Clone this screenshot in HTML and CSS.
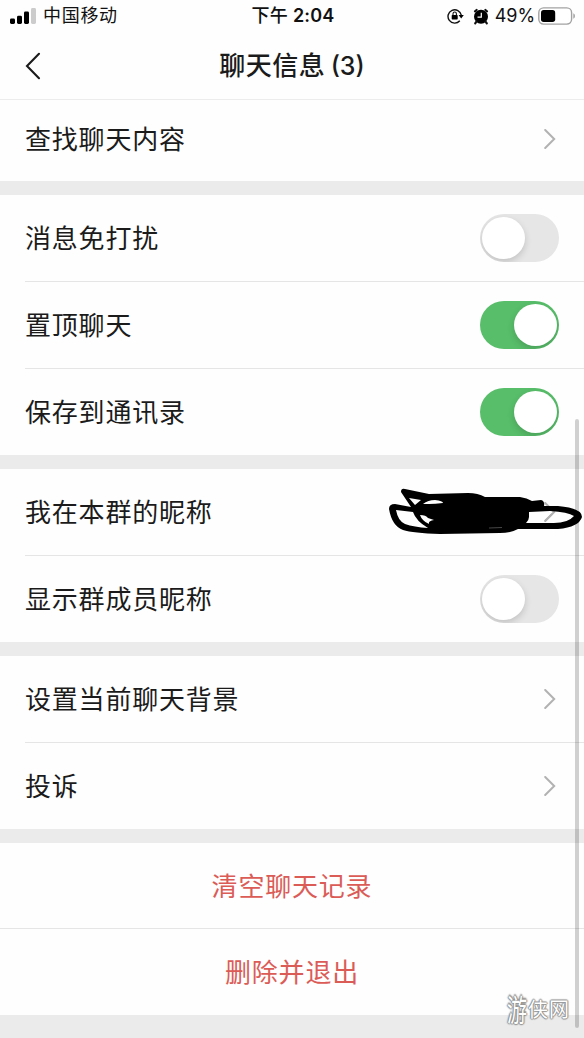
FILE: index.html
```html
<!DOCTYPE html>
<html lang="zh-CN">
<head>
<meta charset="utf-8">
<title>聊天信息</title>
<link rel="stylesheet" href="styles.css">
</head>
<body>
<main class="screen">
  <div class="status">
    <div class="carrier">
      <svg class="signal" width="27" height="16" viewBox="0 0 27 16"><rect x="0" y="10.5" width="5" height="5.5" rx="1.4"/><rect x="7" y="7.8" width="5" height="8.2" rx="1.4"/><rect x="14" y="3.5" width="5" height="12.5" rx="1.4"/><rect x="21" y="0" width="5" height="16" rx="1.4" fill="#ccc"/></svg>
      <span>中国移动</span>
    </div>
    <div class="time">下午 <b>2:04</b></div>
    <div class="indicators">
      <svg width="17" height="16" viewBox="0 0 17 16"><path d="M12.8 12.8A6.7 6.7 0 1 1 14.3 7.2" fill="none" stroke="#111" stroke-width="1.4"/><path d="M11.6 7h5.2l-2.6 3.5z"/><rect x="4.7" y="7" width="6" height="4.5" rx=".7"/><path d="M6 7.4V5.7a1.7 1.7 0 0 1 3.4 0v1.7" fill="none" stroke="#111" stroke-width="1.1"/></svg>
      <svg class="alarm" width="16" height="17" viewBox="0 0 16 17"><circle cx="8" cy="8.8" r="7"/><path d="M2 3.3 3.6 2M14 3.3 12.4 2M3.5 13.5 2.2 15.4M12.5 13.5l1.3 1.9" stroke="#111" stroke-width="2.2" stroke-linecap="round"/><path d="M8.3 4.8v4.4H4.5" fill="none" stroke="#fff" stroke-width="1.2"/></svg>
      <span class="percent">49%</span>
      <svg class="battery" width="38" height="18" viewBox="0 0 38 18"><rect x=".8" y=".9" width="32.8" height="16.2" rx="4.8" fill="#fff" stroke="#a2a2a2" stroke-width="1.4"/><rect x="3" y="3" width="14.2" height="12" rx="2.7"/><path d="M35.3 6.2q1.7.6 1.7 2.8t-1.7 2.8z" fill="#a2a2a2"/></svg>
    </div>
  </div>
  <header class="nav">
    <svg class="back" width="16" height="28" viewBox="0 0 16 28"><path d="M14 1.8 2 14l12 12.2"/></svg>
    <h1>聊天信息 <span>(3)</span></h1>
  </header>

  <section class="group search">
    <div class="row"><span>查找聊天内容</span><svg class="chevron" viewBox="0 0 12 20"><path d="m1.2 1 9 9-9 9"/></svg></div>
  </section>
  <section class="group">
    <div class="row"><span>消息免打扰</span><i class="switch"></i></div>
    <div class="row"><span>置顶聊天</span><i class="switch on"></i></div>
    <div class="row"><span>保存到通讯录</span><i class="switch on"></i></div>
  </section>
  <section class="group">
    <div class="row"><span>我在本群的昵称</span><svg class="chevron" viewBox="0 0 12 20"><path d="m1.2 1 9 9-9 9"/></svg></div>
    <div class="row"><span>显示群成员昵称</span><i class="switch"></i></div>
  </section>
  <section class="group">
    <div class="row"><span>设置当前聊天背景</span><svg class="chevron" viewBox="0 0 12 20"><path d="m1.2 1 9 9-9 9"/></svg></div>
    <div class="row"><span>投诉</span><svg class="chevron" viewBox="0 0 12 20"><path d="m1.2 1 9 9-9 9"/></svg></div>
  </section>
  <section class="group danger">
    <div class="row"><span>清空聊天记录</span></div>
    <div class="row"><span>删除并退出</span></div>
  </section>

  <div class="scrollbar"></div>
  <svg class="scribble" viewBox="0 0 204 80">
    <path fill-rule="evenodd" d="M21 22Q21 18 25 19L49 24 88 23Q98 23 105 27L140 27Q147 28 152 31L161 30Q165 31 164 36L178 36Q202 38 202 47Q199 57 178 59L138 59Q131 63 120 63L60 64Q33 63 23 60Q12 56 9 39Q9 34 15 34L31 37Z
      M29 28 41 30 35 35Z
      M43 34Q48 30 55 30Q63 31 63 33Q55 34 49 34Z
      M16 40 33 42Q36 51 48 58Q34 57 25 54Q18 51 16 40Z
      M40 45Q46 45 48 48L54 50Q48 51 49 54Q42 51 40 45Z
      M149 42 170 41Q188 42 194 46Q188 53 174 53L146 53Q149 50 149 47Z"/>
    <path d="M165 51 172 44" fill="none" stroke="#b2b2b2" stroke-width="1.8"/>
    <path d="M109 58 122 57.500" stroke="#777" stroke-width=".6"/>
  </svg>
  <div class="watermark"><span class="lead">游</span><span>侠</span><span>网</span></div>
</main>
</body>
</html>
```
FILE: styles.css
```css
* { box-sizing: border-box; }
body {
  margin: 0;
  background: #ebebeb;
  color: #1b1b1b;
  font-family: Inter, "Noto Sans CJK SC", sans-serif;
}
.screen {
  position: relative;
  height: 1038px;
  overflow: hidden;
}
.status {
  display: grid;
  grid-template-columns: 1fr auto 1fr;
  align-items: center;
  height: 32px;
  padding: 0 8px 0 10px;
  background: #fefefe;
  color: #111;
  font-size: 18px;
  line-height: 32px;
}
.carrier, .indicators { display: flex; align-items: center; }
.carrier { gap: 6px; letter-spacing: .7px; }
.indicators { justify-content: flex-end; }
.time { font-weight: 500; letter-spacing: .2px; }
.time b { font-weight: 600; }
.alarm { margin: 0 6px 0 9px; }
.percent { letter-spacing: -.1px; }
.battery { margin-left: 3px; }
.nav {
  display: grid;
  grid-template-columns: 60px 1fr 60px;
  align-items: center;
  height: 68px;
  border-bottom: 1px solid #ececec;
  background: #fefefe;
}
.back {
  margin-left: 25px;
  fill: none;
  stroke: #1b1b1b;
  stroke-width: 2.1;
  stroke-linecap: round;
}
h1 {
  margin: 0;
  font-size: 26px;
  font-weight: 500;
  line-height: 40px;
  text-align: center;
  letter-spacing: .5px;
}
h1 span { font-size: 25px; margin-left: -2px; letter-spacing: 0; }
.group { margin-bottom: 14px; background: #fefefe; }
.row {
  display: flex;
  align-items: center;
  justify-content: space-between;
  height: 87px;
  margin-left: 25px;
  padding-right: 25px;
  font-size: 26px;
  letter-spacing: .8px;
  line-height: 38px;
}
.row > span { padding-top: 2px; }
.row:not(:last-child) { border-bottom: 1px solid #e5e5e5; }
.row:last-child { height: 86px; }
.search .row:last-child { height: 81px; padding-bottom: 4px; }
.danger .row {
  justify-content: center;
  height: 86px;
  margin: 0;
  padding: 0;
  color: #db5c57;
}
.chevron {
  width: 12px;
  height: 20px;
  margin-right: 3px;
  fill: none;
  stroke: #b2b2b2;
  stroke-width: 2;
  stroke-linecap: round;
}
.switch {
  display: flex;
  width: 79px;
  height: 48px;
  padding: 3px 2px;
  border-radius: 24px;
  background: #e6e6e6;
  overflow: hidden;
}
.switch::before {
  content: "";
  width: 43px;
  height: 42px;
  border-radius: 50%;
  background: #fff;
  box-shadow: 0 3px 7px rgba(0, 0, 0, .16);
}
.switch.on { justify-content: flex-end; background: #58be6a; }
.scrollbar {
  position: absolute;
  left: 575px;
  top: 419px;
  width: 4px;
  height: 609px;
  border-radius: 2px;
  background: rgba(0, 0, 0, .18);
}
.scribble {
  position: absolute;
  left: 380px;
  top: 470px;
  width: 204px;
  height: 80px;
}
.watermark {
  position: absolute;
  left: 507px;
  top: 993px;
  display: flex;
  align-items: center;
  gap: 1px;
  height: 34px;
  color: #fff;
  font-size: 20px;
  font-weight: 400;
  line-height: 34px;
  text-shadow: 0 0 1px #777, 1px 0 1px #999, -1px 0 1px #999, 0 1px 1px #999, 0 -1px 1px #999;
}
.watermark .lead { transform: scaleY(1.5); }
```
